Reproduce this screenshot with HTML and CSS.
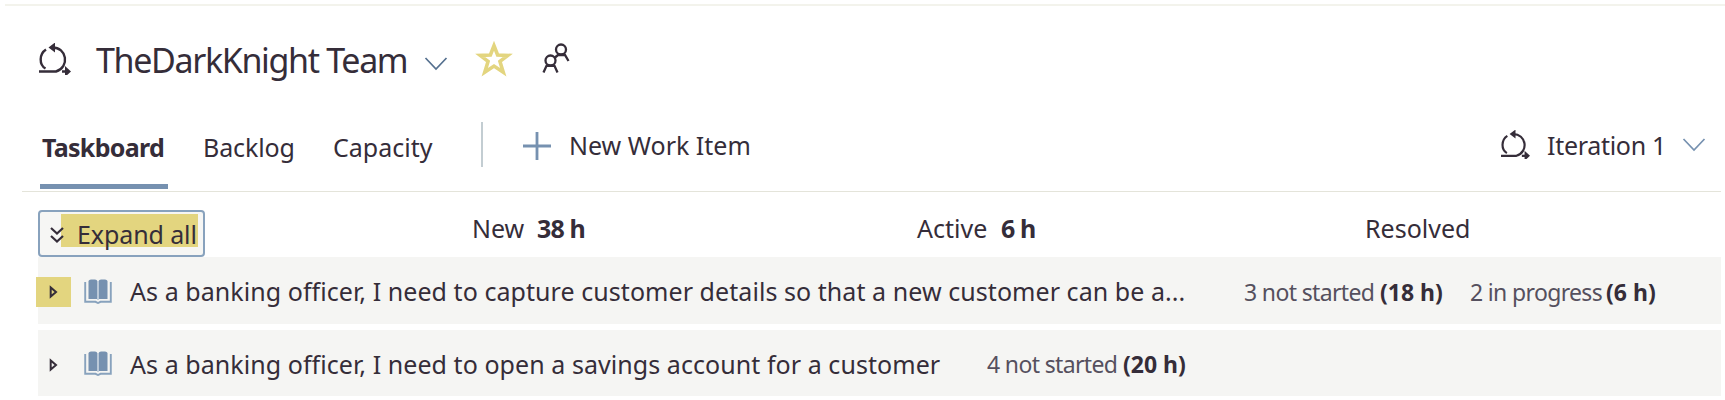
FILE: index.html
```html
<!DOCTYPE html>
<html lang="en">
<head>
<meta charset="utf-8">
<title>TheDarkKnight Team - Taskboard</title>
<link rel="stylesheet" href="styles.css">
</head>
<body>
<svg class="symbols" aria-hidden="true">
  <symbol id="sprint" viewBox="0 0 34 32">
    <path d="M8 6.500C1 11 1 22 7.500 25.500M14 4.500C29 4 32 24 18 28.500H1" fill="none" stroke="currentColor" stroke-width="2.400"/>
    <path d="M17 -.5L10.500 4.500L17 9.500ZM27 23L33 28.500L27 34Z" fill="currentColor"/>
    <path d="M24 28.500H30" stroke="currentColor" stroke-width="2.500"/>
  </symbol>
  <symbol id="chevron" viewBox="0 0 24 14">
    <path d="M1.500 1L12 12L22.500 1" fill="none" stroke="currentColor" stroke-width="1.700"/>
  </symbol>
  <symbol id="book" viewBox="0 0 28 25">
    <path d="M1.200 3V22.800H11.500L14 24L16.500 22.800H26.800V3" fill="none" stroke="#88a2bd" stroke-width="1.900"/>
    <path d="M4.500 2Q5 .5 7 .5H11Q13 .5 13.300 2V20H4.500ZM14.700 2Q15 .5 17 .5H21Q23 .5 23.500 2V20H14.700Z" fill="#7691b0"/>
    <path d="M14 2V21" stroke="#b4c5d6" stroke-width="1.500"/>
  </symbol>
</svg>
<main class="board">
  <header class="team">
    <svg class="sprint-icon"><use href="#sprint"/></svg>
    <h1 class="team-name">TheDarkKnight Team</h1>
    <svg class="chevron team-chevron"><use href="#chevron"/></svg>
    <svg class="star" viewBox="0 0 32 32"><path d="M16 3.500L19.400 12.200L29 12.600L21.600 18.300L24.700 28.500L16 22.700L7.300 28.500L10.400 18.300L3 12.600L12.600 12.200Z" fill="none" stroke="#e3d57f" stroke-width="3.400"/></svg>
    <svg class="people" viewBox="0 0 28 31"><g fill="none" stroke="#352d39" stroke-width="2.300"><circle cx="19" cy="6.500" r="5"/><circle cx="8.500" cy="17.500" r="5"/><path d="M1.500 29.500L4.500 22.800H12.500L15.500 29.500M13 14.500L16 12H23L26.500 18"/></g></svg>
  </header>
  <nav class="tabs">
    <a class="tab tab-active">Taskboard</a>
    <a class="tab tab-backlog">Backlog</a>
    <a class="tab tab-capacity">Capacity</a>
    <span class="divider"></span>
    <svg class="plus" viewBox="0 0 28 28"><path d="M14 0V28M0 14H28" stroke="#7691b0" stroke-width="2.800"/></svg>
    <span class="new-item">New Work Item</span>
    <svg class="sprint-icon iteration-icon"><use href="#sprint"/></svg>
    <span class="iteration">Iteration 1</span>
    <svg class="chevron"><use href="#chevron"/></svg>
  </nav>
  <section class="columns">
    <button class="expand">
      <svg class="double-chevron" viewBox="0 0 14 16"><path d="M1 1L7 6.500L13 1M1 9L7 14.500L13 9" fill="none" stroke="currentColor" stroke-width="2.200"/></svg>
      <span class="expand-label">Expand all</span>
    </button>
    <span class="column column-new"><span class="name">New</span><b>38 h</b></span>
    <span class="column column-active"><span class="name">Active</span><b>6 h</b></span>
    <span class="column column-resolved"><span class="name">Resolved</span></span>
  </section>
  <section class="rows">
    <article class="row">
      <span class="toggle toggle-marked"><svg class="triangle" viewBox="0 0 8 12"><path d="M1.200 1.500V10.500L6.500 6Z" fill="none" stroke="currentColor" stroke-width="2"/></svg></span>
      <svg class="book"><use href="#book"/></svg>
      <span class="row-title title-capture">As a banking officer, I need to capture customer details so that a new customer can be a...</span>
      <span class="stat stat-wide"><span class="count">3 not started</span><b>(18 h)</b></span>
      <span class="stat"><span class="count count-progress">2 in progress</span><b>(6 h)</b></span>
    </article>
    <article class="row">
      <span class="toggle"><svg class="triangle" viewBox="0 0 8 12"><path d="M1.200 1.500V10.500L6.500 6Z" fill="none" stroke="currentColor" stroke-width="2"/></svg></span>
      <svg class="book"><use href="#book"/></svg>
      <span class="row-title title-savings">As a banking officer, I need to open a savings account for a customer</span>
      <span class="stat"><span class="count">4 not started</span><b>(20 h)</b></span>
    </article>
  </section>
</main>
</body>
</html>
```
FILE: styles.css
```css
* { box-sizing: border-box; }
body { margin: 0; background: #fff; color: #352d39; font: 25px/36px "Noto Sans", "Open Sans", sans-serif; overflow: hidden; }
.symbols { position: absolute; width: 0; height: 0; }
svg { display: block; flex: none; overflow: visible; }
.board { width: 1725px; height: 400px; padding-top: 4px; white-space: nowrap; }
.team { display: flex; align-items: flex-start; height: 107px; margin-left: 5px; padding: 37px 0 0 33px; border-top: 2px solid #f3f3ec; }
.sprint-icon { width: 34px; height: 32px; }
.team-name { width: 328px; margin: -7px 0 0 24px; font-size: 34px; line-height: 48px; font-weight: 400; letter-spacing: -1.35px; }
.chevron { width: 24px; height: 14px; color: #55708f; }
.team-chevron { margin-top: 14px; }
.star { width: 34px; height: 34px; margin: -1px 0 0 29px; }
.people { width: 28px; height: 31px; margin-left: 31px; }
.tabs { display: flex; align-items: flex-start; height: 81px; margin: 0 4px 0 22px; padding-left: 18px; border-bottom: 1px solid #e4e4da; }
.tab { padding-top: 18px; line-height: 37px; letter-spacing: -.1px; }
.tab-active { width: 128px; height: 78px; padding-left: 2px; border-bottom: 5px solid #7691b0; font-weight: 700; letter-spacing: -.7px; }
.tab-backlog { width: 91px; margin-left: 35px; }
.tab-capacity { width: 101px; margin-left: 39px; letter-spacing: 0; }
.divider { width: 2px; height: 45px; margin: 11px 0 0 47px; background: #c3cdd2; }
.plus { width: 28px; height: 28px; margin: 21px 0 0 40px; }
.new-item { width: 180px; margin: 16px 0 0 18px; letter-spacing: 0; }
.iteration-icon { width: 31px; height: 29px; margin: 19px 0 0 751px; }
.iteration { width: 118px; margin: 16px 17px 0 16px; letter-spacing: -.3px; }
.tabs > .chevron { margin-top: 27px; color: #7691b0; }
.columns { display: flex; align-items: flex-start; height: 65px; padding: 18px 0 0 38px; }
.expand { display: flex; width: 167px; height: 47px; padding: 2px 4px 0 10px; border: 2px solid #88a2bd; border-radius: 4px; color: inherit; font: inherit; background: linear-gradient(#e3d57f, #e3d57f) 21px 2px / 137px 33px no-repeat #f6f6f4; }
.double-chevron { width: 14px; height: 16px; margin-top: 13px; }
.expand-label { width: 118px; margin: 2px 0 0 13px; letter-spacing: -.1px; text-align: left; }
.column { display: flex; }
.column b { letter-spacing: -.9px; }
.column-new { width: 445px; margin-left: 267px; }
.column-new .name { width: 65px; }
.column-active { width: 448px; }
.column-active .name { width: 84px; }
.rows { display: grid; gap: 6px; }
.row { display: flex; align-items: center; height: 66.500px; margin: 0 4px 0 38px; background: #f5f5f3; }
.toggle { display: flex; align-items: center; width: 35px; height: 30px; margin: 4px 0 0 -2px; padding-left: 13px; }
.toggle-marked { background: #e3d57f; }
.triangle { width: 9px; height: 12px; }
.book { width: 28px; height: 25px; margin: 2px 0 0 13px; }
.row-title { margin: 2px 0 0 18px; letter-spacing: .06px; }
.title-capture { width: 1114px; }
.title-savings { width: 857px; }
.stat { display: flex; margin-top: 3px; font-size: 23px; }
.stat-wide { width: 226px; }
.count { width: 136px; color: #55505e; letter-spacing: -.65px; }
```
